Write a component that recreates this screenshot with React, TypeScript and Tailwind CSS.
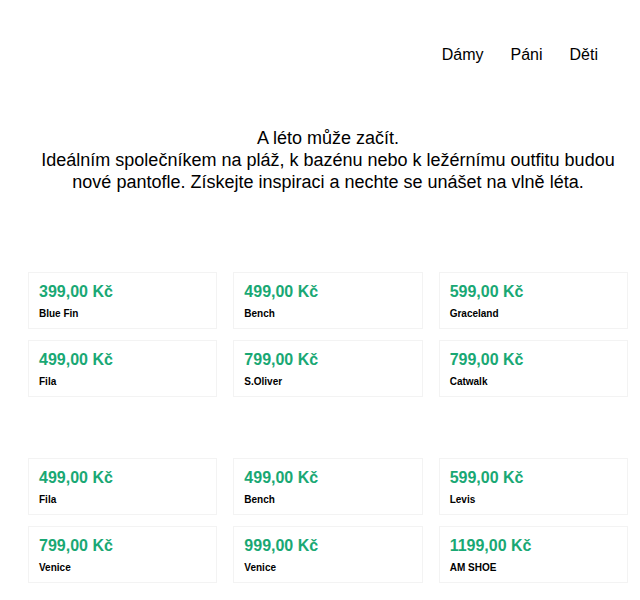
import React from "react";

const sections = [
  [
    { price: "399,00 Kč", name: "Blue Fin" },
    { price: "499,00 Kč", name: "Bench" },
    { price: "599,00 Kč", name: "Graceland" },
    { price: "499,00 Kč", name: "Fila" },
    { price: "799,00 Kč", name: "S.Oliver" },
    { price: "799,00 Kč", name: "Catwalk" },
  ],
  [
    { price: "499,00 Kč", name: "Fila" },
    { price: "499,00 Kč", name: "Bench" },
    { price: "599,00 Kč", name: "Levis" },
    { price: "799,00 Kč", name: "Venice" },
    { price: "999,00 Kč", name: "Venice" },
    { price: "1199,00 Kč", name: "AM SHOE" },
  ],
];

export default function App() {
  return (
    <div className="bg-white text-black min-h-[600px] pb-4" style={{ fontFamily: '"Liberation Sans", Arial, sans-serif' }}>
      <nav className="flex justify-end gap-[27px] pt-[43px] pr-[42px] text-[16px] leading-6">
        <a>Dámy</a>
        <a>Páni</a>
        <a>Děti</a>
      </nav>
      <div className="ml-[28px] w-[600px]">
        <p className="mt-[60px] text-center text-[18px] leading-[22px]">
          A léto může začít.
          <br />
          Ideálním společníkem na pláž, k bazénu nebo k ležérnímu outfitu budou nové pantofle. Získejte inspiraci a nechte se unášet na vlně léta.
        </p>
        <div className="mt-[79px] flex flex-col gap-[61px]">
          {sections.map((items, si) => (
            <div key={si} className="grid grid-cols-3 gap-x-4 gap-y-[11px]">
              {items.map((it, i) => (
                <div key={i} className="border border-[#f3f3f3] pl-[10px] pt-[9px] pb-[8px]">
                  <div className="text-[16px] leading-5 font-bold text-[#19a874]">{it.price}</div>
                  <div className="mt-[6px] text-[10px] leading-3 font-bold">{it.name}</div>
                </div>
              ))}
            </div>
          ))}
        </div>
      </div>
    </div>
  );
}
